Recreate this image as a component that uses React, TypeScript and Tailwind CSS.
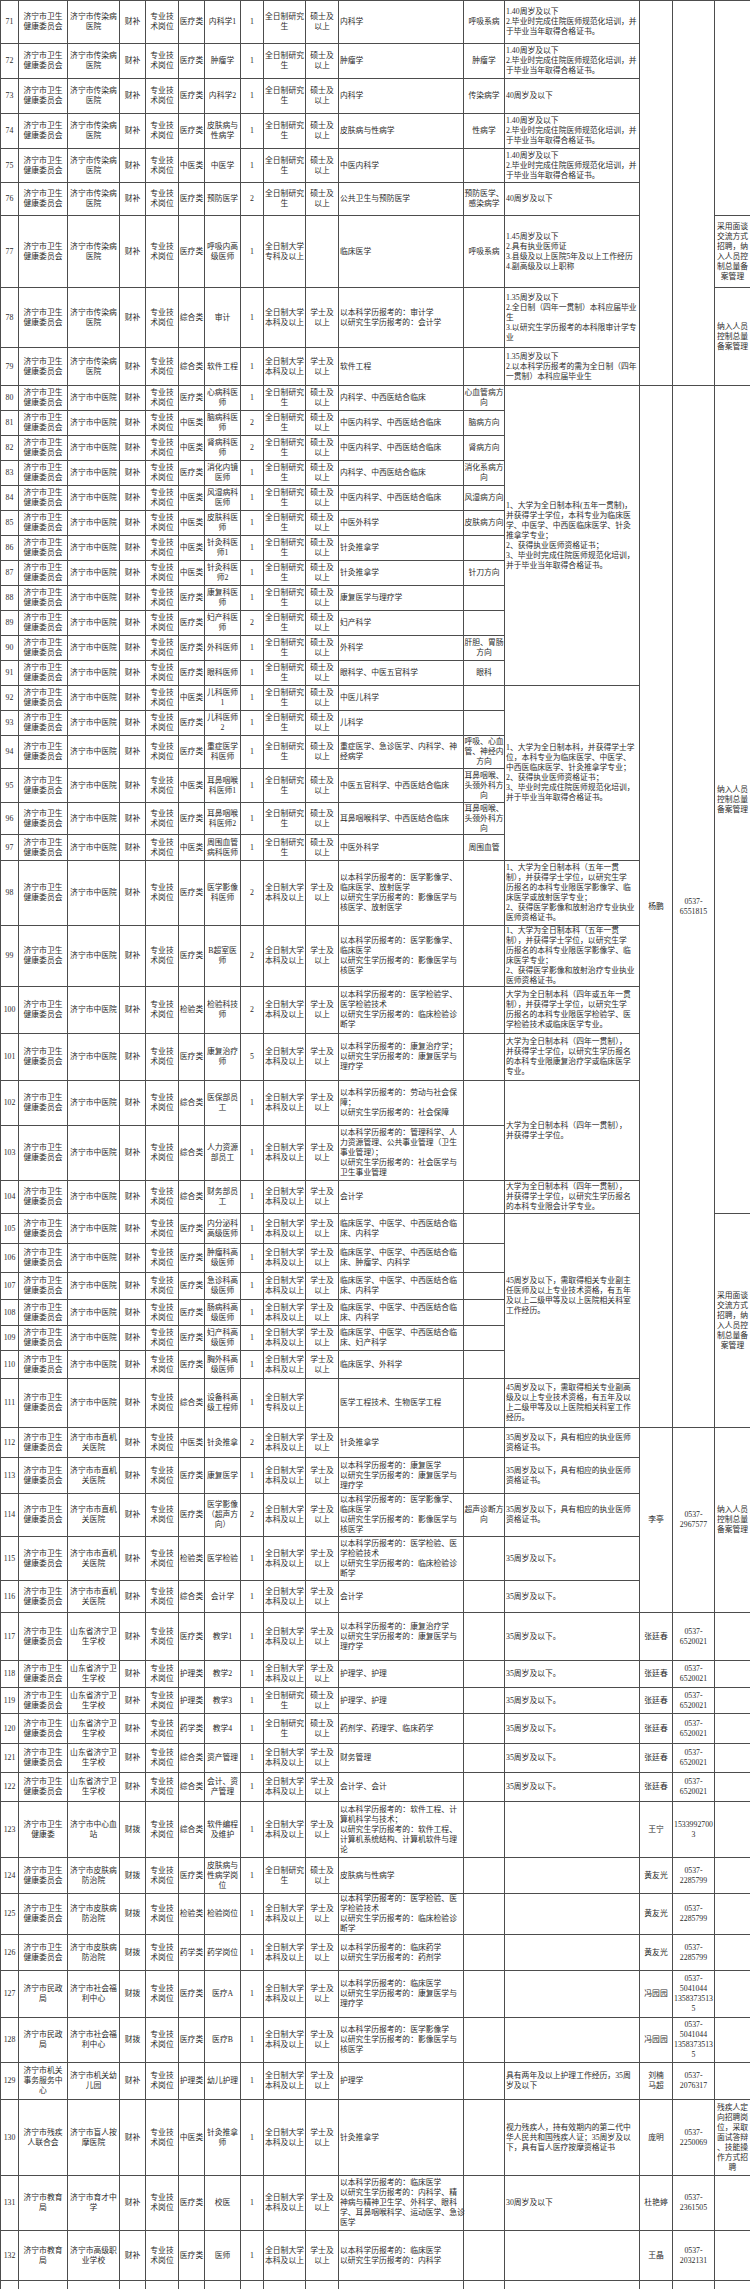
import React from "react";

// 常用单元格文字
const D = "济宁市卫生\n健康委员会";
const CR = "济宁市传染病\n医院";
const ZY = "济宁市中医院";
const ZJ = "济宁市市直机\n关医院";
const WX = "山东省济宁卫\n生学校";
const PF = "济宁市皮肤病\n防治院";
const PT = "专业技\n术岗位";
const YJS = "全日制研究\n生";
const SS = "硕士及\n以上";
const BK = "全日制大学\n本科及以上";
const XS = "学士及\n以上";
const ZK = "全日制大学\n专科及以上";

// [序号, 行高, 主管部门, 单位, 经费, 类别, 岗位名称, 人数, 学历, 学位, 专业, 方向]
type Row = [number, string, string, string, string, string, string, string, string, string, string, string];

const rows: Row[] = [
  [71, "h-[43px]", D, CR, "财补", "医疗类", "内科学1", "1", YJS, SS, "内科学", "呼吸系病"],
  [72, "h-[35px]", D, CR, "财补", "医疗类", "肿瘤学", "1", YJS, SS, "肿瘤学", "肿瘤学"],
  [73, "h-[35px]", D, CR, "财补", "医疗类", "内科学2", "1", YJS, SS, "内科学", "传染病学"],
  [74, "h-[35px]", D, CR, "财补", "医疗类", "皮肤病与\n性病学", "1", YJS, SS, "皮肤病与性病学", "性病学"],
  [75, "h-[34px]", D, CR, "财补", "中医类", "中医学", "1", YJS, SS, "中医内科学", ""],
  [76, "h-[33px]", D, CR, "财补", "医疗类", "预防医学", "2", YJS, SS, "公共卫生与预防医学", "预防医学、\n感染病学"],
  [77, "h-[72px]", D, CR, "财补", "医疗类", "呼吸内高\n级医师", "1", ZK, "", "临床医学", "呼吸系病"],
  [78, "h-[60px]", D, CR, "财补", "综合类", "审计", "1", BK, XS, "以本科学历报考的：审计学\n以研究生学历报考的：会计学", ""],
  [79, "h-[38px]", D, CR, "财补", "综合类", "软件工程", "1", BK, XS, "软件工程", ""],
  [80, "h-[25px]", D, ZY, "财补", "医疗类", "心病科医\n师", "1", YJS, SS, "内科学、中西医结合临床", "心血管病方\n向"],
  [81, "h-[25px]", D, ZY, "财补", "中医类", "脑病科医\n师", "2", YJS, SS, "中医内科学、中西医结合临床", "脑病方向"],
  [82, "h-[25px]", D, ZY, "财补", "中医类", "肾病科医\n师", "2", YJS, SS, "中医内科学、中西医结合临床", "肾病方向"],
  [83, "h-[25px]", D, ZY, "财补", "医疗类", "消化内镜\n医师", "1", YJS, SS, "内科学、中西医结合临床", "消化系病方\n向"],
  [84, "h-[25px]", D, ZY, "财补", "中医类", "风湿病科\n医师", "1", YJS, SS, "中医内科学、中西医结合临床", "风湿病方向"],
  [85, "h-[25px]", D, ZY, "财补", "中医类", "皮肤科医\n师", "1", YJS, SS, "中医外科学", "皮肤病方向"],
  [86, "h-[25px]", D, ZY, "财补", "中医类", "针灸科医\n师1", "1", YJS, SS, "针灸推拿学", ""],
  [87, "h-[25px]", D, ZY, "财补", "中医类", "针灸科医\n师2", "1", YJS, SS, "针灸推拿学", "针刀方向"],
  [88, "h-[25px]", D, ZY, "财补", "医疗类", "康复科医\n师", "1", YJS, SS, "康复医学与理疗学", ""],
  [89, "h-[25px]", D, ZY, "财补", "医疗类", "妇产科医\n师", "2", YJS, SS, "妇产科学", ""],
  [90, "h-[25px]", D, ZY, "财补", "医疗类", "外科医师", "1", YJS, SS, "外科学", "肝胆、胃肠\n方向"],
  [91, "h-[25px]", D, ZY, "财补", "医疗类", "眼科医师", "1", YJS, SS, "眼科学、中医五官科学", "眼科"],
  [92, "h-[25px]", D, ZY, "财补", "中医类", "儿科医师\n1", "1", YJS, SS, "中医儿科学", ""],
  [93, "h-[25px]", D, ZY, "财补", "医疗类", "儿科医师\n2", "1", YJS, SS, "儿科学", ""],
  [94, "h-[33px]", D, ZY, "财补", "医疗类", "重症医学\n科医师", "1", YJS, SS, "重症医学、急诊医学、内科学、神\n经病学", "呼吸、心血\n管、神经内\n方向"],
  [95, "h-[34px]", D, ZY, "财补", "中医类", "耳鼻咽喉\n科医师1", "1", YJS, SS, "中医五官科学、中西医结合临床", "耳鼻咽喉、\n头颈外科方\n向"],
  [96, "h-[32px]", D, ZY, "财补", "医疗类", "耳鼻咽喉\n科医师2", "1", YJS, SS, "耳鼻咽喉科学、中西医结合临床", "耳鼻咽喉、\n头颈外科方\n向"],
  [97, "h-[26px]", D, ZY, "财补", "中医类", "周围血管\n病科医师", "1", YJS, SS, "中医外科学", "周围血管"],
  [98, "h-[65px]", D, ZY, "财补", "医疗类", "医学影像\n科医师", "2", BK, XS, "以本科学历报考的：医学影像学、\n临床医学、放射医学\n以研究生学历报考的：影像医学与\n核医学、放射医学", ""],
  [99, "h-[61px]", D, ZY, "财补", "医疗类", "B超室医\n师", "2", BK, XS, "以本科学历报考的：医学影像学、\n临床医学\n以研究生学历报考的：影像医学与\n核医学", ""],
  [100, "h-[47px]", D, ZY, "财补", "检验类", "检验科技\n师", "2", BK, XS, "以本科学历报考的：医学检验学、\n医学检验技术\n以研究生学历报考的：临床检验诊\n断学", ""],
  [101, "h-[47px]", D, ZY, "财补", "医疗类", "康复治疗\n师", "5", BK, XS, "以本科学历报考的：康复治疗学；\n以研究生学历报考的：康复医学与\n理疗学", ""],
  [102, "h-[45px]", D, ZY, "财补", "综合类", "医保部员\n工", "1", BK, XS, "以本科学历报考的：劳动与社会保\n障；\n以研究生学历报考的：社会保障", ""],
  [103, "h-[55px]", D, ZY, "财补", "综合类", "人力资源\n部员工", "1", BK, XS, "以本科学历报考的：管理科学、人\n力资源管理、公共事业管理（卫生\n事业管理）；\n以研究生学历报考的：社会医学与\n卫生事业管理", ""],
  [104, "h-[33px]", D, ZY, "财补", "综合类", "财务部员\n工", "1", BK, XS, "会计学", ""],
  [105, "h-[30px]", D, ZY, "财补", "医疗类", "内分泌科\n高级医师", "1", BK, XS, "临床医学、中医学、中西医结合临\n床、内科学", ""],
  [106, "h-[29px]", D, ZY, "财补", "医疗类", "肿瘤科高\n级医师", "1", BK, XS, "临床医学、中医学、中西医结合临\n床、肿瘤学、内科学", ""],
  [107, "h-[27px]", D, ZY, "财补", "医疗类", "急诊科高\n级医师", "1", BK, XS, "临床医学、中医学、中西医结合临\n床、内科学", ""],
  [108, "h-[26px]", D, ZY, "财补", "医疗类", "肠病科高\n级医师", "1", BK, XS, "临床医学、中医学、中西医结合临\n床、内科学", ""],
  [109, "h-[25px]", D, ZY, "财补", "医疗类", "妇产科高\n级医师", "1", BK, XS, "临床医学、中医学、中西医结合临\n床、妇产科学", ""],
  [110, "h-[28px]", D, ZY, "财补", "医疗类", "胸外科高\n级医师", "1", BK, XS, "临床医学、外科学", ""],
  [111, "h-[49px]", D, ZY, "财补", "综合类", "设备科高\n级工程师", "1", ZK, "", "医学工程技术、生物医学工程", ""],
  [112, "h-[30px]", D, ZJ, "财补", "中医类", "针灸推拿", "2", BK, XS, "针灸推拿学", ""],
  [113, "h-[36px]", D, ZJ, "财补", "医疗类", "康复医学", "1", BK, XS, "以本科学历报考的：康复医学\n以研究生学历报考的：康复医学与\n理疗学", ""],
  [114, "h-[43px]", D, ZJ, "财补", "医疗类", "医学影像\n（超声方\n向）", "2", BK, XS, "以本科学历报考的：医学影像学、\n临床医学\n以研究生学历报考的：影像医学与\n核医学", "超声诊断方\n向"],
  [115, "h-[44px]", D, ZJ, "财补", "检验类", "医学检验", "1", BK, XS, "以本科学历报考的：医学检验、医\n学检验技术\n以研究生学历报考的：临床检验诊\n断学", ""],
  [116, "h-[32px]", D, ZJ, "财补", "综合类", "会计学", "1", BK, XS, "会计学", ""],
  [117, "h-[48px]", D, WX, "财补", "医疗类", "教学1", "1", BK, XS, "以本科学历报考的：康复治疗学\n以研究生学历报考的：康复医学与\n理疗学", ""],
  [118, "h-[27px]", D, WX, "财补", "护理类", "教学2", "1", BK, XS, "护理学、护理", ""],
  [119, "h-[26px]", D, WX, "财补", "护理类", "教学3", "1", YJS, SS, "护理学、护理", ""],
  [120, "h-[30px]", D, WX, "财补", "药学类", "教学4", "1", YJS, SS, "药剂学、药理学、临床药学", ""],
  [121, "h-[29px]", D, WX, "财补", "综合类", "资产管理", "1", BK, XS, "财务管理", ""],
  [122, "h-[29px]", D, WX, "财补", "综合类", "会计、资\n产管理", "1", BK, XS, "会计学、会计", ""],
  [123, "h-[56px]", "济宁市卫生\n健康委", "济宁市中心血\n站", "财拨", "综合类", "软件编程\n及维护", "1", BK, XS, "以本科学历报考的：软件工程、计\n算机科学与技术；\n以研究生学历报考的：软件工程、\n计算机系统结构、计算机软件与理\n论", ""],
  [124, "h-[36px]", D, PF, "财拨", "医疗类", "皮肤病与\n性病学岗\n位", "1", YJS, SS, "皮肤病与性病学", ""],
  [125, "h-[39px]", D, PF, "财拨", "检验类", "检验岗位", "1", BK, XS, "以本科学历报考的：医学检验、医\n学检验技术\n以研究生学历报考的：临床检验诊\n断学", ""],
  [126, "h-[36px]", D, PF, "财拨", "药学类", "药学岗位", "1", BK, XS, "以本科学历报考的：临床药学\n以研究生学历报考的：药剂学", ""],
  [127, "h-[47px]", "济宁市民政\n局", "济宁市社会福\n利中心", "财拨", "医疗类", "医疗A", "1", BK, XS, "以本科学历报考的：临床医学\n以研究生学历报考的：康复医学与\n理疗学", ""],
  [128, "h-[45px]", "济宁市民政\n局", "济宁市社会福\n利中心", "财拨", "医疗类", "医疗B", "1", BK, XS, "以本科学历报考的：医学影像学\n以研究生学历报考的：影像医学与\n核医学", ""],
  [129, "h-[37px]", "济宁市机关\n事务服务中\n心", "济宁市机关幼\n儿园", "财补", "护理类", "幼儿护理", "1", BK, XS, "护理学", ""],
  [130, "h-[76px]", "济宁市残疾\n人联合会", "济宁市盲人按\n摩医院", "财补", "中医类", "针灸推拿\n师", "1", BK, XS, "针灸推拿学", ""],
  [131, "h-[55px]", "济宁市教育\n局", "济宁市育才中\n学", "财补", "医疗类", "校医", "1", BK, XS, "以本科学历报考的：临床医学\n以研究生学历报考的：内科学、精\n神病与精神卫生学、外科学、眼科\n学、耳鼻咽喉科学、运动医学、急诊\n医学", ""],
  [132, "h-[50px]", "济宁市教育\n局", "济宁市高级职\n业学校", "财补", "医疗类", "医师", "1", BK, XS, "以本科学历报考的：临床医学\n以研究生学历报考的：内科学", ""],
];

const C1 = "1.40周岁及以下\n2.毕业时完成住院医师规范化培训，并\n于毕业当年取得合格证书。";
const C35 = "35周岁及以下，具有相应的执业医师\n资格证书。";
const N1 = "采用面谈\n交流方式\n招聘，纳\n入人员控\n制总量备\n案管理";
const N2 = "纳入人员\n控制总量\n备案管理";

// 合并单元格：起始行 -> [跨行数, 文字]
const cond: Record<number, [number, string]> = {
  71: [1, C1],
  72: [1, C1],
  73: [1, "40周岁及以下"],
  74: [1, C1],
  75: [1, C1],
  76: [1, "40周岁及以下"],
  77: [1, "1.45周岁及以下\n2.具有执业医师证\n3.县级及以上医院5年及以上工作经历\n4.副高级及以上职称"],
  78: [1, "1.35周岁及以下\n2.全日制（四年一贯制）本科应届毕业\n生\n3.以研究生学历报考的本科限审计学专\n业"],
  79: [1, "1.35周岁及以下\n2.以本科学历报考的需为全日制（四年\n一贯制）本科应届毕业生"],
  80: [12, "1、大学为全日制本科(五年一贯制)，\n并获得学士学位，本科专业为临床医\n学、中医学、中西医临床医学、针灸\n推拿学专业；\n2、获得执业医师资格证书；\n3、毕业时完成住院医师规范化培训，\n并于毕业当年取得合格证书。"],
  92: [6, "1、大学为全日制本科，并获得学士学\n位，本科专业为临床医学、中医学、\n中西医临床医学、针灸推拿学专业；\n2、获得执业医师资格证书；\n3、毕业时完成住院医师规范化培训，\n并于毕业当年取得合格证书。"],
  98: [1, "1、大学为全日制本科（五年一贯\n制），并获得学士学位，以研究生学\n历报名的本科专业限医学影像学、临\n床医学或放射医学专业；\n2、获得医学影像和放射治疗专业执业\n医师资格证书。"],
  99: [1, "1、大学为全日制本科（五年一贯\n制），并获得学士学位，以研究生学\n历报名的本科专业限医学影像学、临\n床医学专业；\n2、获得医学影像和放射治疗专业执业\n医师资格证书。"],
  100: [1, "大学为全日制本科（四年或五年一贯\n制），并获得学士学位，以研究生学\n历报名的本科专业限医学检验学、医\n学检验技术或临床医学专业。"],
  101: [1, "大学为全日制本科（四年一贯制），\n并获得学士学位，以研究生学历报名\n的本科专业限康复治疗学或临床医学\n专业。"],
  102: [2, "大学为全日制本科（四年一贯制），\n并获得学士学位。"],
  104: [1, "大学为全日制本科（四年一贯制），\n并获得学士学位，以研究生学历报名\n的本科专业限会计学专业。"],
  105: [6, "45周岁及以下，需取得相关专业副主\n任医师及以上专业技术资格，有五年\n及以上二级甲等及以上医院相关科室\n工作经历。"],
  111: [1, "45周岁及以下，需取得相关专业副高\n级及以上专业技术资格，有五年及以\n上二级甲等及以上医院相关科室工作\n经历。"],
  112: [1, C35],
  113: [1, C35],
  114: [1, C35],
  129: [1, "具有两年及以上护理工作经历，35周\n岁及以下"],
  130: [1, "视力残疾人，持有效期内的第二代中\n华人民共和国残疾人证；35周岁及以\n下，具有盲人医疗按摩资格证书"],
  131: [1, "30周岁及以下"],
  132: [1, ""],
};
for (let n = 115; n <= 122; n++) cond[n] = [1, "35周岁及以下。"];
for (let n = 123; n <= 128; n++) cond[n] = [1, ""];

const person: Record<number, [number, string]> = {
  71: [9, ""],
  80: [32, "杨鹏"],
  112: [5, "李亭"],
  123: [1, "王宁"],
  124: [1, "黄友光"],
  125: [1, "黄友光"],
  126: [1, "黄友光"],
  127: [1, "冯园园"],
  128: [1, "冯园园"],
  129: [1, "刘楠\n马超"],
  130: [1, "庞明"],
  131: [1, "杜艳婷"],
  132: [1, "王晶"],
};
for (let n = 117; n <= 122; n++) person[n] = [1, "张廷春"];

const phone: Record<number, [number, string]> = {
  71: [9, ""],
  80: [32, "0537-\n6551815"],
  112: [5, "0537-\n2967577"],
  123: [1, "1533992700\n3"],
  124: [1, "0537-\n2285799"],
  125: [1, "0537-\n2285799"],
  126: [1, "0537-\n2285799"],
  127: [1, "0537-\n5041044\n1358373513\n5"],
  128: [1, "0537-\n5041044\n1358373513\n5"],
  129: [1, "0537-\n2076317"],
  130: [1, "0537-\n2250069"],
  131: [1, "0537-\n2361505"],
  132: [1, "0537-\n2032131"],
};
for (let n = 117; n <= 122; n++) phone[n] = [1, "0537-\n6520021"];

const note: Record<number, [number, string]> = {
  71: [6, ""],
  77: [1, N1],
  78: [2, N2],
  80: [25, N2],
  105: [7, N1],
  112: [5, N2],
  130: [1, "残疾人定\n向招聘岗\n位，采取\n面试答辩\n、技能操\n作方式招\n聘"],
  131: [1, ""],
  132: [1, ""],
};
for (let n = 117; n <= 129; n++) note[n] = [1, ""];

const widths = [
  "w-[18px]", "w-[49px]", "w-[52px]", "w-[26px]", "w-[33px]", "w-[26px]", "w-[36px]", "w-[23px]",
  "w-[42px]", "w-[33px]", "w-[125px]", "w-[41px]", "w-[135px]", "w-[33px]", "w-[42px]", "w-[36px]",
];

const td = "border border-[#4d4d4d] p-0 align-middle whitespace-pre text-center";
const tdLeft = "border border-[#4d4d4d] p-0 pl-[1px] align-middle whitespace-pre text-left";

function Span({ map, n, left }: { map: Record<number, [number, string]>; n: number; left?: boolean }) {
  const c = map[n];
  if (!c) return null;
  return (
    <td rowSpan={c[0]} className={left ? tdLeft : td}>
      {c[1]}
    </td>
  );
}

export default function App() {
  return (
    <div className="w-[750px] bg-white">
      <table className="w-[750px] table-fixed border-collapse text-[7.8px] leading-[10px] text-[#2b2b2b] font-['Liberation_Serif','Noto_Sans_CJK_SC',serif]">
        <colgroup>
          {widths.map((w, i) => (
            <col key={i} className={w} />
          ))}
        </colgroup>
        <tbody>
          {rows.map((r) => {
            const [n, h, dept, unit, fund, cat, name, num, edu, deg, major, dir] = r;
            return (
              <tr key={n} className={h}>
                <td className={td}>{n}</td>
                <td className={td}>{dept}</td>
                <td className={td}>{unit}</td>
                <td className={td}>{fund}</td>
                <td className={td}>{PT}</td>
                <td className={td}>{cat}</td>
                <td className={td}>{name}</td>
                <td className={td}>{num}</td>
                <td className={td}>{edu}</td>
                <td className={td}>{deg}</td>
                <td className={tdLeft}>{major}</td>
                <td className={td}>{dir}</td>
                <Span map={cond} n={n} left />
                <Span map={person} n={n} />
                <Span map={phone} n={n} />
                <Span map={note} n={n} />
              </tr>
            );
          })}
          <tr className="h-[14px]">
            {widths.map((w, i) => (
              <td key={i} className={td}></td>
            ))}
          </tr>
        </tbody>
      </table>
    </div>
  );
}
